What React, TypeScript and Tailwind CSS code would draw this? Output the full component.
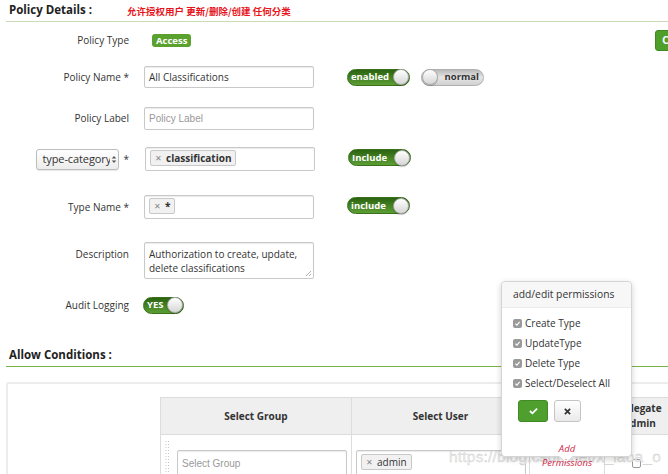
import React from "react";

const Knob = () => (
  <span className="w-[16px] h-[16px] rounded-full border border-[#aaa] bg-gradient-to-b from-[#ffffff] to-[#d6d6d6] shrink-0 shadow-[0_1px_1px_rgba(0,0,0,0.25)]" />
);

const GreenToggle = ({ label, w }: { label: string; w: string }) => (
  <div className={`${w} h-[17px] rounded-full bg-gradient-to-b from-[#2b6410] to-[#5c9e34] flex items-center justify-between pl-[3px] border border-[#3a701c]`}>
    <span className="text-white font-bold text-[9.5px] leading-none">{label}</span>
    <Knob />
  </div>
);

const Check = () => (
  <span className="w-[9px] h-[9px] rounded-[2px] bg-[#9a9a9a] flex items-center justify-center shrink-0">
    <svg width="7" height="7" viewBox="0 0 10 10">
      <path d="M2 5.2 L4.2 7.4 L8 2.8" stroke="#fff" strokeWidth="1.6" fill="none" />
    </svg>
  </span>
);

const Tag = ({ children, bold }: { children: React.ReactNode; bold?: boolean }) => (
  <span className="inline-flex items-center h-[16px] px-[4px] bg-[#f1f1f1] border border-[#c8c8c8] rounded-[2px] text-[10px] text-[#333] leading-none">
    <span className="text-[#888] text-[8px] mr-[4px]">✕</span>
    <span className={bold ? "font-bold" : ""}>{children}</span>
  </span>
);

const Label = ({ children }: { children: React.ReactNode }) => (
  <div className="w-[130px] text-right text-[10px] text-[#333] pr-[1px]">{children}</div>
);

const inputCls =
  "w-[170px] border border-[#c9c9c9] rounded-[2px] shadow-[inset_0_1px_1px_rgba(0,0,0,0.08)] bg-white flex items-center px-[4px] text-[10px] text-[#333]";

const placeholderCls = "font-['Liberation_Sans',sans-serif] text-[10px] text-[#999]";

const DragHandle = () => (
  <svg width="5" height="36" viewBox="0 0 5 36" className="ml-[4px] mt-[6px] shrink-0">
    {Array.from({ length: 12 }).map((_, r) => (
      <g key={r}>
        <rect x="0.5" y={r * 3} width="1" height="1" fill="#c4c4c4" />
        <rect x="3" y={r * 3} width="1" height="1" fill="#c4c4c4" />
      </g>
    ))}
  </svg>
);

export default function App() {
  return (
    <div className="w-[668px] h-[474px] overflow-hidden bg-white relative font-['Open_Sans',sans-serif] text-[#333]">
      {/* Header */}
      <div className="ml-[6px] h-[22px] border-b border-[#c9dcb6] flex items-center pl-[3px] pb-[2px]">
        <span className="text-[11.5px] font-bold text-[#222]">Policy Details :</span>
        <span className="ml-[35px] mt-[4px] text-[9.5px] font-bold text-[#e8141b] font-['Noto_Sans_CJK_SC',sans-serif]">
          允许授权用户 更新/删除/创建 任何分类
        </span>
      </div>

      {/* Row 1 */}
      <div className="mt-[8px] h-[21px] flex items-center">
        <Label>Policy Type</Label>
        <span className="ml-[22px] h-[13px] px-[4px] rounded-[3px] bg-[#5ba12d] text-white font-bold text-[9.5px] flex items-center leading-none">
          Access
        </span>
        <div className="ml-auto mr-[-30px] w-[43px] h-[21px] rounded-[3px] bg-[#4f9f2b] border border-[#3f8a20] text-white text-[11px] font-bold pl-[6px] flex items-center">
          C
        </div>
      </div>

      {/* Row 2 */}
      <div className="mt-[15px] h-[22px] flex items-center">
        <Label>Policy Name *</Label>
        <div className={`ml-[14px] h-[22px] ${inputCls}`}>All Classifications</div>
        <div className="ml-[33px]">
          <GreenToggle label="enabled" w="w-[63px]" />
        </div>
        <div className="ml-[11px] w-[63px] h-[17px] rounded-full bg-gradient-to-b from-[#b9b9b9] via-[#e6e6e6] to-[#d0d0d0] border border-[#b0b0b0] flex items-center justify-between pr-[4px]">
          <Knob />
          <span className="text-[#333] font-bold text-[9.5px] leading-none">normal</span>
        </div>
      </div>

      {/* Row 3 */}
      <div className="mt-[19px] h-[23px] flex items-center">
        <Label>Policy Label</Label>
        <div className={`ml-[14px] h-[23px] ${inputCls}`}>
          <span className={placeholderCls}>Policy Label</span>
        </div>
      </div>

      {/* Row 4 */}
      <div className="mt-[17px] h-[24px] flex items-center">
        <div className="w-[130px] flex items-center justify-end">
          <div className="w-[83px] h-[21px] rounded-[3px] border border-[#bdbdbd] bg-gradient-to-b from-[#ffffff] to-[#ececec] flex items-center pl-[5px] text-[11px] text-[#333] shadow-[0_1px_1px_rgba(0,0,0,0.1)]">
            <span className="w-[68px] overflow-hidden whitespace-nowrap tracking-[-0.1px]">type-category</span>
            <svg width="6" height="9" viewBox="0 0 6 10" className="ml-[1px]">
              <path d="M0.5 4 L3 1 L5.5 4 Z M0.5 6 L3 9 L5.5 6 Z" fill="#555" />
            </svg>
          </div>
          <span className="ml-[4px] mr-[1px] text-[10px] self-start mt-[3px]">*</span>
        </div>
        <div className={`ml-[15px] h-[24px] ${inputCls} items-start pt-[2px] px-[3px]`}>
          <Tag bold>classification</Tag>
        </div>
        <div className="ml-[33px] self-start mt-[2px]">
          <GreenToggle label="Include" w="w-[63px]" />
        </div>
      </div>

      {/* Row 5 */}
      <div className="mt-[24px] h-[24px] flex items-center">
        <Label>Type Name *</Label>
        <div className={`ml-[14px] h-[24px] ${inputCls} items-start pt-[2px] px-[3px]`}>
          <Tag bold>*</Tag>
        </div>
        <div className="ml-[33px] self-start mt-[2px]">
          <GreenToggle label="include" w="w-[63px]" />
        </div>
      </div>

      {/* Row 6 */}
      <div className="mt-[23px] h-[37px] flex items-start">
        <div className="pt-[5px]">
          <Label>Description</Label>
        </div>
        <div className={`ml-[14px] h-[37px] ${inputCls} items-start pt-[4px] leading-[14px] relative whitespace-nowrap`}>
          <span>
            Authorization to create, update,
            <br />
            delete classifications
          </span>
          <svg width="7" height="7" viewBox="0 0 7 7" className="absolute right-[1px] bottom-[1px]">
            <path d="M6 1 L1 6 M6 4 L4 6" stroke="#999" strokeWidth="0.8" />
          </svg>
        </div>
      </div>

      {/* Row 7 */}
      <div className="mt-[18px] h-[16px] flex items-center">
        <Label>Audit Logging</Label>
        <div className="ml-[13px]">
          <GreenToggle label="YES" w="w-[41px]" />
        </div>
      </div>

      {/* Allow Conditions */}
      <div className="mt-[31px] ml-[6px] h-[23px] border-b-[1.5px] border-[#78b348] flex items-center pl-[3px]">
        <span className="text-[11.5px] font-bold text-[#222]">Allow Conditions :</span>
      </div>

      {/* Box */}
      <div className="mt-[15px] ml-[6px] h-[120px] border-t-2 border-l-2 border-[#ececec] rounded-tl-[3px] pl-[152px] pt-[13px]">
        <div className="flex border border-[#dcdcdc] w-[540px]">
          {[
            { w: "w-[190px]", t: "Select Group" },
            { w: "w-[178px]", t: "Select User" },
            { w: "w-[75px]", t: "" },
            { w: "w-[70px]", t: "Delegate\nAdmin" },
          ].map((c, i) => (
            <div key={i} className={`${c.w} shrink-0 ${i > 0 ? "border-l border-[#dcdcdc]" : ""}`}>
              <div className="h-[37px] bg-[#efefef] border-b border-[#dcdcdc] flex items-center justify-center text-center text-[10px] font-bold text-[#333] whitespace-pre-line leading-[15px]">
                {c.t}
              </div>
              <div className="h-[60px] relative">
                {i === 0 && (
                  <div className="flex">
                    <DragHandle />
                    <div className={`ml-[7px] mt-[15px] h-[26px] ${inputCls} w-[170px]`}>
                      <span className={placeholderCls}>Select Group</span>
                    </div>
                  </div>
                )}
                {i === 1 && (
                  <div className={`ml-[4px] mt-[15px] h-[26px] ${inputCls} items-start pt-[3px] w-[170px] px-[3px]`}>
                    <Tag>admin</Tag>
                  </div>
                )}
                {i === 2 && (
                  <div className="relative z-10 pt-[7px] text-center italic text-[9.5px] text-[#d2274a] leading-[14px]">
                    Add
                    <br />
                    Permissions
                  </div>
                )}
                {i === 3 && (
                  <div className="flex justify-center pt-[24px] pr-[6px]">
                    <span className="w-[9px] h-[9px] border border-[#999] rounded-[2px] bg-white" />
                  </div>
                )}
              </div>
            </div>
          ))}
        </div>
      </div>

      {/* Watermark */}
      <div className="absolute left-[449px] top-[445px] text-[15.5px] font-['Liberation_Sans',sans-serif] text-[#ededed] tracking-[0.2px] [-webkit-text-stroke:0.3px_#c8c8c8] pointer-events-none">
        https://blog.csdn.net/x_iaoa_o
      </div>

      {/* Popover */}
      <div className="absolute left-[501px] top-[281px] w-[131px] h-[176px] bg-white border border-[#d5d5d5] rounded-[4px] shadow-[0_2px_6px_rgba(0,0,0,0.18)]">
        <div className="h-[26px] bg-[#f7f7f7] border-b border-[#ebebeb] rounded-t-[4px] flex items-center pl-[11px] text-[10.3px] text-[#333]">
          add/edit permissions
        </div>
        <div className="pl-[11px] pt-[8px] flex flex-col gap-[6px] text-[10px] text-[#333]">
          {["Create Type", "UpdateType", "Delete Type", "Select/Deselect All"].map((t) => (
            <div key={t} className="h-[14px] flex items-center gap-[3px]">
              <Check />
              <span>{t}</span>
            </div>
          ))}
        </div>
        <div className="mt-[10px] ml-[16px] flex gap-[6px]">
          <div className="w-[30px] h-[22px] rounded-[3px] bg-[#4e9f2e] border border-[#418a24] flex items-center justify-center">
            <svg width="9" height="8" viewBox="0 0 10 8">
              <path d="M1 4 L3.8 6.6 L9 1.4" stroke="#fff" strokeWidth="2" fill="none" />
            </svg>
          </div>
          <div className="w-[27px] h-[22px] rounded-[3px] bg-gradient-to-b from-[#ffffff] to-[#eaeaea] border border-[#c4c4c4] flex items-center justify-center">
            <svg width="7" height="7" viewBox="0 0 8 8">
              <path d="M1 1 L7 7 M7 1 L1 7" stroke="#333" strokeWidth="2" />
            </svg>
          </div>
        </div>
        <div className="absolute left-[59px] bottom-[-6px] w-[10px] h-[10px] bg-white border-r border-b border-[#d5d5d5] rotate-45" />
      </div>
    </div>
  );
}
